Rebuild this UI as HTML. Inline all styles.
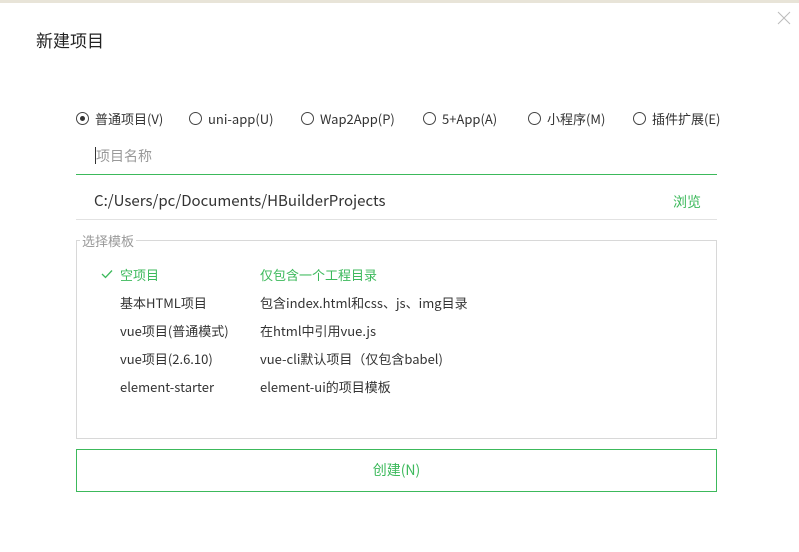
<!DOCTYPE html>
<html><head><meta charset="utf-8"><style>
*{margin:0;padding:0;box-sizing:border-box}
body{width:799px;height:552px;background:#fff;position:relative;overflow:hidden;font-family:"Noto Sans CJK SC","Liberation Sans",sans-serif;color:#333;font-size:13px}
.a{position:absolute;white-space:nowrap;line-height:18px}
.top{position:absolute;left:0;top:0;width:799px;height:3px;background:#e8e4d8}
.r{position:absolute;top:112px;width:13px;height:13px;border:1px solid #444;border-radius:50%}
.rl{top:110px;font-size:13px;color:#333}
.g{color:#3cb95b}
</style></head><body>
<div class="top"></div>
<div class="a" style="left:36px;top:29px;font-size:17px;line-height:22px;color:#222">新建项目</div>
<svg class="a" style="left:777px;top:11px" width="14" height="14"><path d="M1 1L13 13M13 1L1 13" stroke="#bbb" stroke-width="1"/></svg>

<div class="r" style="left:76px"><div style="position:absolute;left:3px;top:3px;width:5px;height:5px;border-radius:50%;background:#333"></div></div>
<div class="a rl" style="left:95px">普通项目(V)</div>
<div class="r" style="left:189px"></div><div class="a rl" style="left:208px">uni-app(U)</div>
<div class="r" style="left:301px"></div><div class="a rl" style="left:320px">Wap2App(P)</div>
<div class="r" style="left:423px"></div><div class="a rl" style="left:442px">5+App(A)</div>
<div class="r" style="left:528px"></div><div class="a rl" style="left:547px">小程序(M)</div>
<div class="r" style="left:633px"></div><div class="a rl" style="left:652px">插件扩展(E)</div>

<div class="a" style="left:95px;top:147px;width:1px;height:17px;background:#333"></div>
<div class="a" style="left:96px;top:147px;font-size:14px;color:#999">项目名称</div>
<div class="a" style="left:76px;top:174px;width:641px;height:1px;background:#3cb95b"></div>

<div class="a" style="left:94px;top:191px;font-size:15px;line-height:20px;color:#333">C:/Users/pc/Documents/HBuilderProjects</div>
<div class="a g" style="left:673px;top:193px;font-size:14px">浏览</div>
<div class="a" style="left:76px;top:219px;width:641px;height:1px;background:#e2e2e2"></div>

<div class="a" style="left:76px;top:240px;width:641px;height:199px;border:1px solid #d8d8d8"></div>
<div class="a" style="left:80px;top:232px;background:#fff;padding:0 2px;color:#999;font-size:13px">选择模板</div>

<svg class="a" style="left:101px;top:269px" width="12" height="10"><path d="M1 5L4.5 8.5L11 1.5" stroke="#3cb95b" stroke-width="1.3" fill="none"/></svg>
<div class="a g" style="left:120px;top:266px">空项目</div><div class="a g" style="left:260px;top:266px">仅包含一个工程目录</div>
<div class="a" style="left:120px;top:294px">基本HTML项目</div><div class="a" style="left:260px;top:294px">包含index.html和css、js、img目录</div>
<div class="a" style="left:120px;top:322px">vue项目(普通模式)</div><div class="a" style="left:260px;top:322px">在html中引用vue.js</div>
<div class="a" style="left:120px;top:350px">vue项目(2.6.10)</div><div class="a" style="left:260px;top:350px">vue-cli默认项目（仅包含babel)</div>
<div class="a" style="left:120px;top:378px">element-starter</div><div class="a" style="left:260px;top:378px">element-ui的项目模板</div>

<div class="a g" style="left:76px;top:449px;width:641px;height:43px;border:1px solid #3cb95b;text-align:center;line-height:41px;font-size:14px">创建(N)</div>
</body></html>
